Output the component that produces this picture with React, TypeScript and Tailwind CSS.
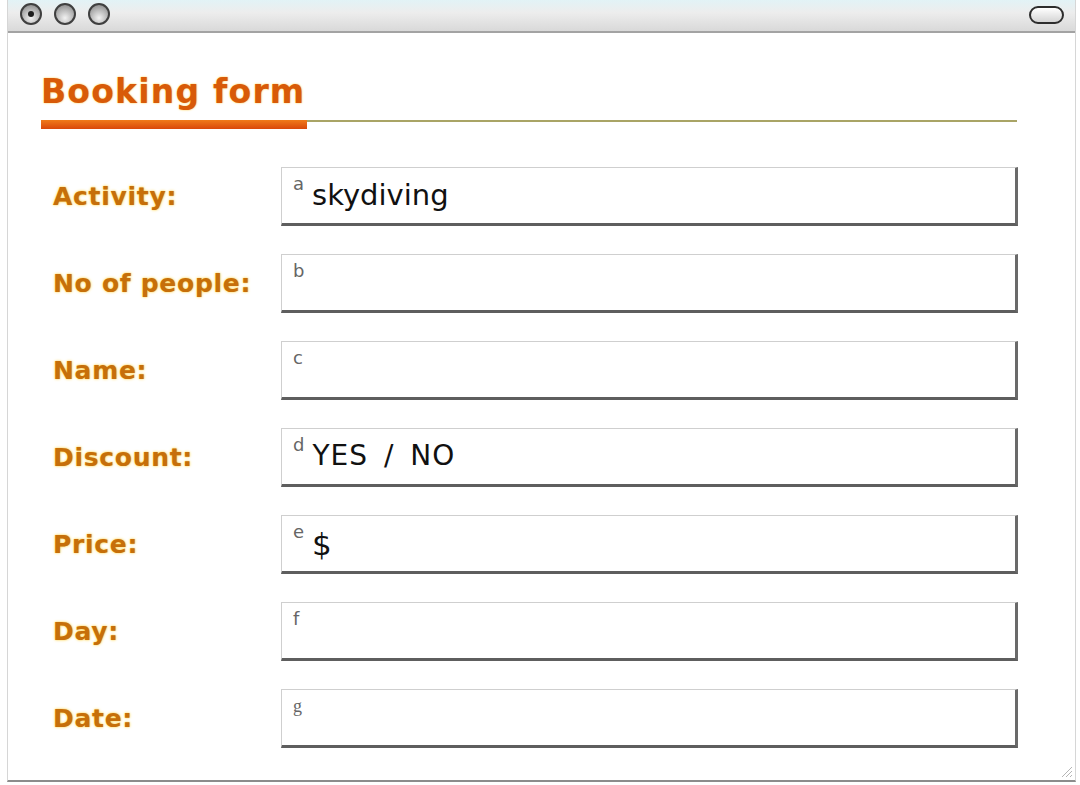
import React from "react";

type Field = {
  label: string;
  tag: string;
  value?: string;
  tagFont?: string;
  valueClass?: string;
};

const fields: Field[] = [
  { label: "Activity:", tag: "a", value: "skydiving" },
  { label: "No of people:", tag: "b" },
  { label: "Name:", tag: "c" },
  {
    label: "Discount:",
    tag: "d",
    value: "YES / NO",
    valueClass: "text-[28px] tracking-[1px] [word-spacing:6px]",
  },
  { label: "Price:", tag: "e", value: "$", valueClass: "text-[31px]" },
  { label: "Day:", tag: "f" },
  { label: "Date:", tag: "g", tagFont: "font-['Liberation_Serif',serif]" },
];

const TrafficLight = ({ dot }: { dot?: boolean }) => (
  <div className="flex h-[22px] w-[22px] items-center justify-center rounded-full border-2 border-[#3f3f3f] bg-[radial-gradient(circle_at_50%_72%,#f2f2f2_0%,#b4b4b4_55%,#7c7c7c_100%)]">
    {dot && <div className="h-[6px] w-[6px] rounded-full bg-[#1e1e1e]" />}
  </div>
);

const FormRow = ({ field }: { field: Field }) => (
  <div className="flex items-center">
    <div className="w-[228px] font-['DejaVu_Sans',sans-serif] text-[25px] font-bold leading-none tracking-[0.7px] text-[#c66f0a] [text-shadow:0_0_3px_#ffd24a,0_0_1px_#ffe680]">
      {field.label}
    </div>
    <div className="flex h-[59px] w-[737px] items-start border-t border-l border-r-[3px] border-b-[3px] border-t-[#cfcfcf] border-l-[#cfcfcf] border-r-[#6a6a6a] border-b-[#5e5e5e] bg-white pl-[11px] pt-[7px]">
      <span
        className={`text-[18px] leading-none text-[#666] ${
          field.tagFont ?? "font-['DejaVu_Sans',sans-serif]"
        }`}
      >
        {field.tag}
      </span>
      {field.value && (
        <span
          className={`ml-[8px] mt-[6px] font-['DejaVu_Sans',sans-serif] leading-none text-[#111] ${
            field.valueClass ?? "text-[29px]"
          }`}
        >
          {field.value}
        </span>
      )}
    </div>
  </div>
);

export default function App() {
  return (
    <div className="h-[785px] w-[1080px] overflow-hidden bg-white">
      <div className="ml-[7px] flex h-[782px] w-[1069px] flex-col border-x border-b-2 border-x-[#d6d6d6] border-b-[#8c8c8c] bg-white">
        {/* title bar */}
        <div className="flex h-[33px] items-center justify-between border-b-2 border-[#a3a3a3] bg-[linear-gradient(#e2f3f6,#ededed_40%,#d9d9d9)] pl-[12px] pr-[11px]">
          <div className="flex gap-[12px] pb-[4px]">
            <TrafficLight dot />
            <TrafficLight />
            <TrafficLight />
          </div>
          <div className="mb-[2px] h-[18px] w-[35px] rounded-full border-2 border-[#2d2d2d] bg-[linear-gradient(#ffffff,#d4d4d4)]" />
        </div>

        {/* heading */}
        <div className="pl-[33px] pr-[58px] pt-[42px]">
          <h1 className="font-['DejaVu_Sans',sans-serif] text-[33px] font-bold leading-none tracking-[1.2px] text-[#d85a08] [text-shadow:0_0_2px_#ffc83a]">
            Booking form
          </h1>
          <div className="mt-[12px] flex items-start">
            <div className="h-[9px] w-[266px] bg-[linear-gradient(#f07a1a,#d9480a)]" />
            <div className="h-[2px] flex-1 bg-[#a9a466]" />
          </div>
        </div>

        {/* fields */}
        <div className="flex flex-col gap-[28px] pl-[45px] pt-[38px]">
          {fields.map((f) => (
            <FormRow key={f.tag} field={f} />
          ))}
        </div>

        {/* resize grip */}
        <div className="mt-auto flex justify-end pb-[2px] pr-[2px]">
          <svg width="14" height="14" viewBox="0 0 14 14">
            <path d="M13 3 L3 13 M13 7 L7 13 M13 11 L11 13" stroke="#b5b5b5" strokeWidth="1" />
          </svg>
        </div>
      </div>
    </div>
  );
}
